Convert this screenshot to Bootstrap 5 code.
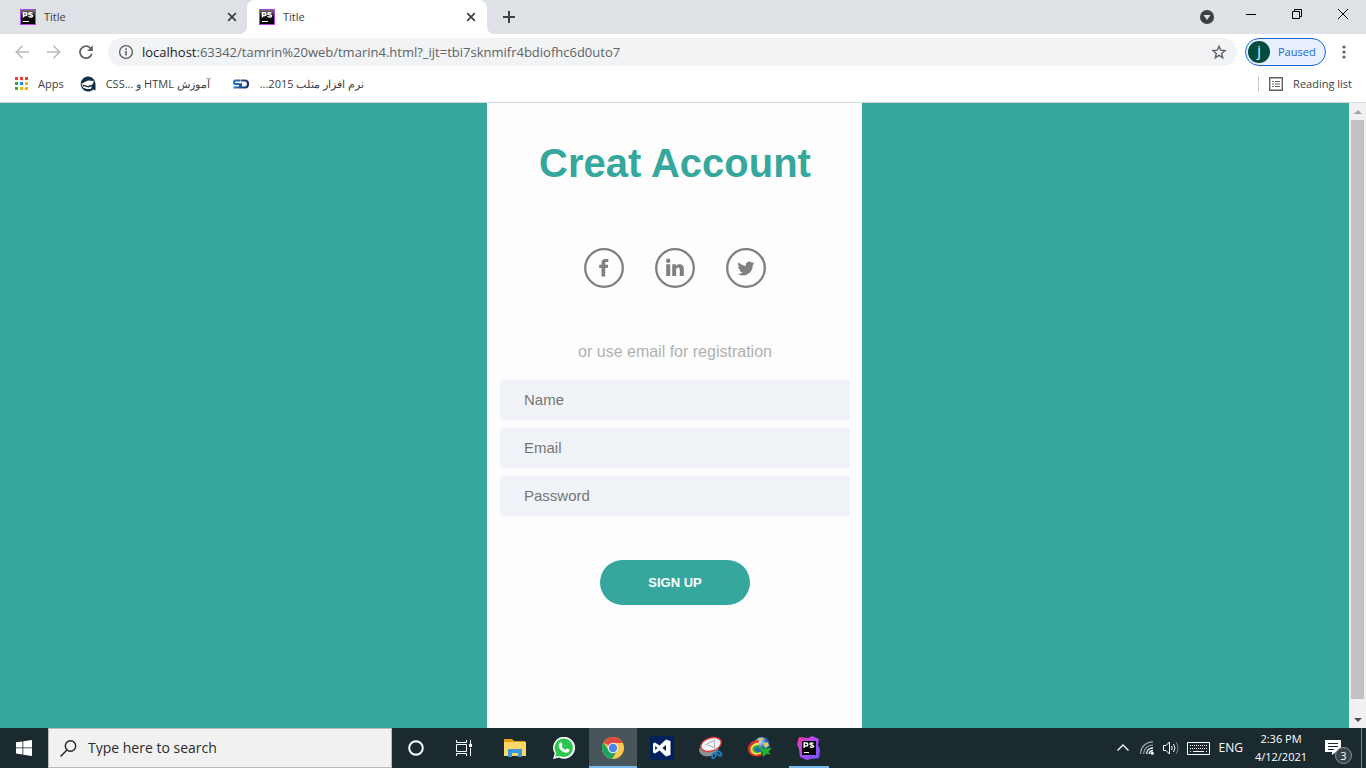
<!DOCTYPE html>
<html lang="en">
<head>
<meta charset="utf-8">
<meta name="viewport" content="width=device-width, initial-scale=1">
<title>Title</title>
<link href="https://cdn.jsdelivr.net/npm/bootstrap@5.3.0/dist/css/bootstrap.min.css" rel="stylesheet">
<style>
  :root { --teal: #35a79c; --chrome: #dee1e6; --ink: #3c4043; }
  body { font-family: "Open Sans", "Noto Sans", sans-serif; font-size: 12px; line-height: 16px; color: var(--ink); }
  svg { display: block; flex: none; }
  button { color: inherit; }
  .plain { border: 0; background: none; padding: 0; display: flex; align-items: center; justify-content: center; flex: none; }

  .tab-strip { height: 34px; background: var(--chrome); padding-left: 8px; }
  .browser-tab { width: 240px; height: 34px; padding: 0 11px 0 12px; font-size: 11px; position: relative; }
  .browser-tab.current { background: #fff; border-radius: 8px 8px 0 0; margin-left: -1px; }
  .browser-tab.current::before, .browser-tab.current::after { content: ""; position: absolute; bottom: 0; width: 8px; height: 8px; }
  .browser-tab.current::before { left: -8px; background: radial-gradient(circle at 0 0, transparent 8px, #fff 8px); }
  .browser-tab.current::after { right: -8px; background: radial-gradient(circle at 100% 0, transparent 8px, #fff 8px); }
  .new-tab { width: 28px; height: 34px; margin-left: 8px; }
  .win-btn { width: 46px; height: 28px; color: #000; }

  .tool-row { height: 36px; padding: 0 12px 0 6px; }
  .nav-btn { width: 32px; height: 28px; }
  .omnibox { height: 28px; border-radius: 14px; background: #f1f3f4; margin: 0 8px 0 6px; padding: 0 10px; }
  .omnibox .address { font-size: 13px; color: #5f6368; }
  .omnibox .address b { font-weight: 400; color: #202124; }
  .profile { width: 81px; height: 28px; border: 1px solid #1967d2; border-radius: 14px; background: #e8f0fe; color: #1967d2; padding: 0 0 0 2px; font-size: 11px; justify-content: flex-start; gap: 8px; }
  .avatar { width: 22px; height: 22px; border-radius: 50%; background: #004d40; color: #fff; font-size: 14px; line-height: 20px; }
  .menu-btn { width: 20px; height: 28px; margin-left: 8px; }

  .bookmark-row { height: 33px; padding: 0 14px; border-bottom: 1px solid #d5d8dc; }
  .bookmark-row a { color: var(--ink); text-decoration: none; display: flex; align-items: center; gap: 10px; height: 28px; font-size: 11px; white-space: nowrap; }
  .bookmark-row a + a { margin-left: 16px; }
  .bookmark-row [dir] { min-width: 110px; text-align: left; }
  .divider { width: 1px; height: 16px; background: #c6c9cd; }

  .viewport-area { background: var(--teal); min-height: 0; }
  .signup { width: 375px; max-width: 100%; background: #fdfdfd; font-family: "Liberation Sans", Arial, sans-serif; padding: 32px 12px 0 13px; }
  .signup h1 { font-size: 40px; line-height: 56px; font-weight: 700; color: var(--teal); margin: 0 0 57px; }
  .social { gap: 31px; margin-bottom: 52px; }
  .social a { width: 40px; height: 40px; }
  .signup p { font-size: 16px; line-height: 24px; color: #b0b0b0; margin: 0 0 16px; }
  .signup .form-control { height: 40px; border: 0; border-radius: 0; background: #f0f4f8; padding: 0 24px 2px; font-size: 15px; margin-bottom: 8px; }
  .signup .form-control::placeholder { color: #757575; }
  .signup .btn { width: 150px; height: 45px; border: 0; border-radius: 24px; background: var(--teal); color: #fff; font-size: 13px; font-weight: 700; margin-top: 36px; }

  .scroll-track { width: 17px; background: #f1f1f1; padding: 0 2px; }
  .scroll-track .arrow { height: 17px; }
  .scroll-thumb { background: #c1c1c1; flex: 0 1 579px; }

  .taskbar { height: 40px; background: #1b2a2f; color: #fff; }
  .task-btn { width: 48px; height: 40px; }
  .task-btn.running { border-bottom: 2px solid #76b9ed; padding-top: 2px; }
  .task-btn.running:not(.front) { width: 40px; margin: 0 4px; }
  .task-btn.front { background: #48565b; }
  .search-box { width: 344px; background: #f1f1f1; border: 1px solid #b9b9b9; padding-left: 11px; gap: 11px; }
  .search-box input { border: 0; background: none; outline: 0; font-size: 14px; color: #222; padding: 0; min-width: 0; }
  .search-box input::placeholder { color: #2b2b2b; opacity: 1; }
  .app-list { padding-left: 3px; gap: 1px; }
  .tray-btn { width: 24px; height: 40px; }
  .clock { width: 68px; font-size: 11px; line-height: 18px; color: #fff; }
  .note-btn { width: 40px; height: 40px; margin-left: 2px; position: relative; }
  .note-count { position: absolute; right: 5px; bottom: 4px; width: 17px; height: 17px; border-radius: 50%; background: #39444a; border: 1px solid #8c9499; font-size: 11px; line-height: 15px; }
  .desktop-edge { width: 5px; border-left: 1px solid #77838a; margin-left: 4px; }
</style>
</head>
<body class="d-flex flex-column vh-100 overflow-hidden">

<svg width="0" height="0" class="position-absolute" aria-hidden="true">
  <defs>
    <linearGradient id="psg" x1="0" y1="0" x2="0" y2="1"><stop offset="0" stop-color="#777"/><stop offset=".5" stop-color="#111"/><stop offset="1" stop-color="#000"/></linearGradient>
    <linearGradient id="sdg" gradientUnits="userSpaceOnUse" x1="0" y1="0" x2="16" y2="0"><stop offset="0" stop-color="#2c7cc4"/><stop offset="1" stop-color="#1d2a70"/></linearGradient>
    <linearGradient id="blob" x1="0" y1="0" x2="1" y2="1"><stop offset="0" stop-color="#ff318c"/><stop offset=".4" stop-color="#b74af7"/><stop offset="1" stop-color="#6b57ff"/></linearGradient>
    <radialGradient id="globe" cx=".35" cy=".3"><stop offset="0" stop-color="#cfe6fb"/><stop offset=".6" stop-color="#4d8fdc"/><stop offset="1" stop-color="#1c4f9c"/></radialGradient>
    <symbol id="storm" viewBox="0 0 16 16">
      <rect x=".5" y=".5" width="15" height="15" fill="url(#psg)" stroke="#b345f1"/>
      <path d="M3.500 8.500V3.700h2a1.400 1.400 0 0 1 0 2.900h-2M12.500 4.200c-1.500-.9-3.700-.7-3.700.5 0 1.400 3.700.8 3.700 2.300 0 1.500-2.600 1.300-4 .4" fill="none" stroke="#fff" stroke-width="1.500"/>
      <path d="M3 12.500h6" stroke="#fff"/>
    </symbol>
    <symbol id="cross" viewBox="0 0 10 10"><path d="M1.200 1.200l7.600 7.600M8.800 1.200L1.200 8.800" stroke="#3c4043" stroke-width="1.700"/></symbol>
  </defs>
</svg>

<header class="flex-shrink-0 bg-white">
  <div class="tab-strip d-flex">
    <div class="browser-tab d-flex align-items-center">
      <svg width="16" height="16"><use href="#storm"/></svg><span class="ms-2 flex-grow-1">Title</span>
      <button class="plain" aria-label="Close tab"><svg width="10" height="10"><use href="#cross"/></svg></button>
    </div>
    <div class="browser-tab current d-flex align-items-center">
      <svg width="16" height="16"><use href="#storm"/></svg><span class="ms-2 flex-grow-1">Title</span>
      <button class="plain" aria-label="Close tab"><svg width="10" height="10"><use href="#cross"/></svg></button>
    </div>
    <button class="plain new-tab" aria-label="New tab"><svg width="12" height="12" viewBox="0 0 12 12"><path d="M6 0v12M0 6h12" stroke="#3c4043" stroke-width="2"/></svg></button>
    <div class="d-flex ms-auto">
      <button class="plain me-2" aria-label="Search tabs"><svg width="26" height="14" viewBox="0 0 26 14"><circle cx="13" cy="7" r="7" fill="#3c4043"/><path d="M9.500 5h7L13 10z" fill="#dee1e6"/></svg></button>
      <button class="plain win-btn" aria-label="Minimize"><svg width="10" height="10"><path d="M0 5.500h10" stroke="#000"/></svg></button>
      <button class="plain win-btn" aria-label="Restore"><svg width="10" height="10" fill="none" stroke="#000"><path d="M.5 2.500h7v7h-7zM2.500 2.500v-2h7v7h-2"/></svg></button>
      <button class="plain win-btn" aria-label="Close"><svg width="10" height="10"><path d="M0 0l10 10M10 0L0 10" stroke="#000"/></svg></button>
    </div>
  </div>

  <div class="tool-row d-flex align-items-center">
    <button class="plain nav-btn" aria-label="Back"><svg width="14" height="14" viewBox="0 0 14 14" fill="none" stroke="#b9bbbe" stroke-width="1.600"><path d="M14 7H1.500M7.500.8L1.300 7l6.200 6.200"/></svg></button>
    <button class="plain nav-btn" aria-label="Forward"><svg width="14" height="14" viewBox="0 0 14 14" fill="none" stroke="#b9bbbe" stroke-width="1.600"><path d="M0 7h12.500M6.500.8L12.700 7l-6.200 6.200"/></svg></button>
    <button class="plain nav-btn" aria-label="Reload"><svg width="14" height="14" viewBox="0 0 14 14"><path d="M12.800 8.800A6 6 0 1 1 11.200 2.800L12 3.600" fill="none" stroke="#5f6368" stroke-width="1.800"/><path d="M13.800.3v5.700H8.100z" fill="#5f6368"/></svg></button>
    <div class="omnibox d-flex align-items-center flex-grow-1">
      <svg width="16" height="16" viewBox="0 0 16 16"><circle cx="8" cy="8" r="6.400" fill="none" stroke="#5f6368" stroke-width="1.400"/><path d="M8 7v4.500M8 4.300v1.600" stroke="#5f6368" stroke-width="1.600"/></svg>
      <span class="address ms-2 flex-grow-1"><b>localhost</b>:63342/tamrin%20web/tmarin4.html?_ijt=tbi7sknmifr4bdiofhc6d0uto7</span>
      <button class="plain" aria-label="Bookmark this page"><svg width="16" height="16" viewBox="0 0 16 16"><path d="M8 2.200l1.700 4 4.300.4-3.300 2.800 1 4.300L8 11.400l-3.700 2.300 1-4.300L2 6.600l4.300-.4z" fill="none" stroke="#5f6368" stroke-width="1.400"/></svg></button>
    </div>
    <button class="plain profile"><span class="avatar">j</span><span>Paused</span></button>
    <button class="plain menu-btn" aria-label="Menu"><svg width="4" height="14" fill="#5f6368"><circle cx="2" cy="2" r="1.600"/><circle cx="2" cy="7" r="1.600"/><circle cx="2" cy="12" r="1.600"/></svg></button>
  </div>

  <nav class="bookmark-row d-flex">
    <a href="#"><svg width="14" height="14"><path d="M1 0h3v3H1zM6 0h3v3H6zM11 0h3v3h-3z" fill="#ea4335"/><path d="M1 5h3v3H1zM1 10h3v3H1z" fill="#34a853"/><path d="M6 5h3v3H6z" fill="#1a85f5"/><path d="M11 5h3v3h-3zM6 10h3v3H6zM11 10h3v3h-3z" fill="#f4b400"/></svg><span>Apps</span></a>
    <a href="#"><svg width="16" height="16" viewBox="0 0 16 16"><path d="M8 .5a7.500 7.500 0 0 1 7.500 7.500v6.500l-2.200-1A7.500 7.500 0 1 1 8 .5z" fill="#102f43"/><path d="M1 8l7-3.500 6 .5-1.500 3.500L8 10z" fill="#fff"/><path d="M4 10.300l4.500 1.200 3.500-1.300-1 2.500c-2 .8-5 .3-7-.8z" fill="#fff"/><path d="M2 8.500l2 3.500" stroke="#fff"/></svg><span dir="rtl">آموزش HTML و ...CSS</span></a>
    <a href="#"><svg width="18" height="16" viewBox="0 0 16 16"><path d="M7.500 4.500h-5C.5 4.500.5 8 2.500 8h3c2 0 2 3.500 0 3.500H.5M9 8H7.500M8 4.500h4c4 0 4 7 0 7H8V8" fill="none" stroke="url(#sdg)" stroke-width="2.200"/></svg><span dir="rtl">نرم افزار متلب 2015...</span></a>
    <a href="#" class="ms-auto"><span class="divider"></span><svg width="14" height="14" fill="none" stroke="#5f6368"><path d="M.7.7h12.600v12.600H.7z" stroke-width="1.400"/><path d="M3 4.500h2M6 4.500h5M3 7h2M6 7h5M3 9.500h2M6 9.500h5"/></svg><span>Reading list</span></a>
  </nav>
</header>

<main class="viewport-area d-flex flex-grow-1">
  <div class="flex-grow-1 d-flex justify-content-center">
    <form class="signup text-center">
      <h1>Creat Account</h1>
      <div class="social d-flex justify-content-center">
        <a href="#" aria-label="Facebook"><svg width="40" height="40" fill="#808080"><circle cx="20" cy="20" r="18.800" fill="none" stroke="#808080" stroke-width="2.300"/><path d="M17.500 28.500V20h-2.300v-3.300h2.300V15c0-2.700 1.400-4 3.800-4h3v3.100h-1.900c-1 0-1.200.5-1.200 1.200v1.400h3L23.800 20h-2.600v8.500z"/></svg></a>
        <a href="#" aria-label="LinkedIn"><svg width="40" height="40" fill="#808080"><circle cx="20" cy="20" r="18.800" fill="none" stroke="#808080" stroke-width="2.300"/><circle cx="13.200" cy="12.700" r="2.200"/><path d="M11.200 16.300h4V28h-4zM17.200 16.300H21v1.600c1.600-2.500 7.800-2.600 7.800 3V28h-4v-6.200c0-3.200-3.600-2.900-3.600 0V28h-4z"/></svg></a>
        <a href="#" aria-label="Twitter"><svg width="40" height="40" fill="#808080"><circle cx="20" cy="20" r="18.800" fill="none" stroke="#808080" stroke-width="2.300"/><path transform="translate(11.500 11.500) scale(1.060)" d="M5.026 15c6.038 0 9.341-5.003 9.341-9.334q.002-.211-.006-.422A6.700 6.700 0 0 0 16 3.542a6.700 6.700 0 0 1-1.889.518 3.300 3.300 0 0 0 1.447-1.817 6.500 6.500 0 0 1-2.087.793A3.286 3.286 0 0 0 7.875 6.030a9.320 9.320 0 0 1-6.767-3.429 3.290 3.290 0 0 0 1.018 4.382A3.300 3.300 0 0 1 .64 6.575v.045a3.290 3.290 0 0 0 2.632 3.218 3.200 3.200 0 0 1-.865.115 3 3 0 0 1-.614-.057 3.280 3.280 0 0 0 3.067 2.277A6.600 6.600 0 0 1 .78 13.580a6 6 0 0 1-.78-.045A9.340 9.340 0 0 0 5.026 15"/></svg></a>
      </div>
      <p>or use email for registration</p>
      <input class="form-control" type="text" placeholder="Name" aria-label="Name">
      <input class="form-control" type="email" placeholder="Email" aria-label="Email">
      <input class="form-control" type="password" placeholder="Password" aria-label="Password">
      <button class="btn" type="button">SIGN UP</button>
    </form>
  </div>
  <div class="scroll-track d-flex flex-column">
    <div class="arrow d-flex align-items-center justify-content-center"><svg width="8" height="4"><path d="M0 4l4-4 4 4z" fill="#a3a3a3"/></svg></div>
    <div class="scroll-thumb"></div>
    <div class="arrow mt-auto d-flex align-items-center justify-content-center"><svg width="8" height="4"><path d="M0 0l4 4 4-4z" fill="#505050"/></svg></div>
  </div>
</main>

<footer class="taskbar d-flex flex-shrink-0">
  <button class="plain task-btn" aria-label="Start"><svg width="16" height="16" fill="#fff"><path d="M0 2.300L6.500 1.400v6.100H0zM7.300 1.300L16 0v7.500H7.300zM0 8.300h6.500v6.200L0 13.600zM7.300 8.300H16V16l-8.700-1.300z"/></svg></button>
  <label class="search-box d-flex align-items-center">
    <svg width="17" height="17" fill="none" stroke="#222" stroke-width="1.400"><circle cx="10.500" cy="6" r="5.200"/><path d="M7 10L.5 16.500"/></svg>
    <input class="flex-grow-1" type="search" placeholder="Type here to search" aria-label="Search">
  </label>
  <button class="plain task-btn" aria-label="Cortana"><svg width="16" height="16"><circle cx="8" cy="8" r="6.800" fill="none" stroke="#fff" stroke-width="2"/></svg></button>
  <button class="plain task-btn" aria-label="Task view"><svg width="16" height="16" fill="none" stroke="#fff"><path d="M.5 0v2.500h10V0M.5 4.500h10v7H.5zM.5 16v-2.500h10V16M14.500 0v4M14.500 8v8"/><path d="M13 4h3v3h-3z" fill="#fff" stroke="none"/></svg></button>
  <div class="app-list d-flex">
    <button class="plain task-btn" aria-label="File Explorer"><svg width="22" height="20"><path d="M0 1h8l2 2h11v14H0z" fill="#e5a00d"/><path d="M0 4h22v14H0z" fill="#ffd766"/><path d="M4 11h14v8h-4v-4H8v4H4z" fill="#3a96dd"/></svg></button>
    <button class="plain task-btn" aria-label="WhatsApp"><svg width="22" height="22" viewBox="0 0 22 22"><path d="M0 22l1.700-5.500A11 11 0 1 1 6 20.500z" fill="#fff"/><path d="M2.200 19.800l1.100-3.700a9.200 9.200 0 1 1 3.300 2.800z" fill="#2cc64f"/><path d="M7.300 5.500c.6-.3 1.100-.1 1.400.6l.8 1.800c.1.600-1 1.400-.8 1.700.9 1.600 2 2.500 3.600 3.200.6.100 1.200-1.500 1.800-1.300l2.200 1.100c.6.300-.2 3.400-2.900 3.200-4-.4-8.200-4.400-7.700-7.900.1-1 .8-2 1.600-2.400z" fill="#fff"/></svg></button>
    <button class="plain task-btn running front" aria-label="Chrome"><svg width="22" height="22" viewBox="0 0 22 22"><circle cx="11" cy="11" r="11" fill="#fbc94a"/><path d="M11 11L1.500 5.500A11 11 0 0 1 20.500 5.500L21 6H11z" fill="#dc4b3e"/><path d="M1.500 5.500A11 11 0 0 0 10 22l5.300-8.500L11 11 6.700 13.500z" fill="#1fa263"/><circle cx="11" cy="11" r="5.200" fill="#f4f6f8"/><circle cx="11" cy="11" r="4.200" fill="#4a86ee"/></svg></button>
    <button class="plain task-btn" aria-label="Visual Studio"><svg width="24" height="24"><path d="M0 0h24v24H0z" fill="#00205b"/><path d="M16 3.500l4.500 1.500v14L16 20.500l-6.500-6L5 17.500l-2-1V7.500l2-1 4.500 3zM5.200 10v4L7.500 12zM16 9l-3.700 3L16 15z" fill="#fff" fill-rule="evenodd"/></svg></button>
    <button class="plain task-btn" aria-label="Snipping Tool"><svg width="24" height="24"><ellipse cx="10" cy="13" rx="10" ry="7" transform="rotate(-18 10 13)" fill="#8c9296"/><ellipse cx="12" cy="8.500" rx="10.500" ry="6.500" transform="rotate(-18 12 8.500)" fill="#f3f5f7" stroke="#df3a3e" stroke-width="1.300"/><path d="M6 9l9-4.500M9 9l6 2.500M15 4l1 10" stroke="#a5abaf" fill="none"/><g fill="none" stroke="#1b7fc0" stroke-width="1.800"><ellipse cx="15" cy="19.500" rx="1.600" ry="3" transform="rotate(20 15 19.500)"/><ellipse cx="20" cy="17.500" rx="1.600" ry="3" transform="rotate(-50 20 17.500)"/></g></svg></button>
    <button class="plain task-btn" aria-label="Internet Download Manager"><svg width="24" height="24"><circle cx="14" cy="9" r="8" fill="url(#globe)"/><path d="M10 3c4-2 7-1 5 1l-3 1zM15 7l5-1 1 4-4 2z" fill="#d8c964"/><g fill="none" stroke-width="2.300"><path d="M11 5.500C3 5 0 11 1.500 15S9 20.500 14 18" stroke="#e53227"/><path d="M11 7.800c-6 0-8.500 4-7.200 7S9 18 13 16.500" stroke="#ffe14a"/><path d="M11 10c-4 0-6 2.500-5 4.500s4 1.500 7 .5" stroke="#35b24a"/><path d="M11 12c-3 0-4 2-2 2.500h4" stroke="#2860c8"/></g><path d="M9 10.500l6 2 9-.500-3.500 3.500 2 3-4-.5-3.500 3-.5-4.500z" fill="#22b32e"/></svg></button>
    <button class="plain task-btn running" aria-label="PhpStorm"><svg width="24" height="24"><path d="M2 1l9 1 4-2 7 3-1 6 2 5-1 8-8 1-4 1-7-3-1-8L0 8z" fill="url(#blob)"/><path d="M5 5h14v14H5z"/><path d="M7.200 12V7h2.100a1.400 1.400 0 0 1 0 3H7.200M16.500 7.400c-1.500-.8-3.500-.6-3.500.6 0 1.300 3.500.8 3.500 2.300 0 1.400-2.500 1.300-3.800.4" fill="none" stroke="#fff" stroke-width="1.500"/><path d="M7 16.500h5" stroke="#fff"/></svg></button>
  </div>
  <div class="d-flex ms-auto align-items-center">
    <button class="plain tray-btn" aria-label="Show hidden icons"><svg width="12" height="8"><path d="M.5 6.500L6 1l5.500 5.500" fill="none" stroke="#fff" stroke-width="1.300"/></svg></button>
    <button class="plain tray-btn" aria-label="Network"><svg width="14" height="14" fill="none"><g stroke="#a9b1b5" stroke-width="1.200"><path d="M.6 13C.6 6 6 .8 13 .8M3.600 13c0-5 4-9 9.400-9"/></g><path d="M6.600 13c0-3.500 2.600-6 6.400-6M9.300 13c0-2 1.300-3.300 3.700-3.500" stroke="#fff" stroke-width="1.300"/><circle cx="12.300" cy="12.300" r="1.500" fill="#fff"/></svg></button>
    <button class="plain tray-btn" aria-label="Volume"><svg width="16" height="14" fill="none" stroke="#fff"><path d="M.5 4.500h2.500l3.500-3.500v12L3 9.500H.5zM8.500 5q1.500 2 0 4M10.500 3q3 4 0 8"/><path d="M13 1q4 6 0 12" stroke="#7d878c"/></svg></button>
    <button class="plain tray-btn mx-1" aria-label="Touch keyboard"><svg width="23" height="13" fill="none" stroke="#fff"><path d="M.5.5h22v12H.5z"/><path d="M3 3.500h17M3 6.500h17" stroke-dasharray="1 1"/><path d="M3 9.500h1M6 9.500h11M19 9.500h1"/></svg></button>
    <button class="plain mx-1">ENG</button>
    <div class="clock text-center">2:36 PM<br>4/12/2021</div>
    <button class="plain note-btn" aria-label="Notifications"><svg width="16" height="16" class="me-2"><path d="M0 0h16v12h-5l-4 3v-3H0z" fill="#fff"/><path d="M3 3.500h10M3 6.500h10M3 9.500h6" stroke="#1b2a2f"/></svg><span class="note-count">3</span></button>
    <div class="desktop-edge align-self-stretch"></div>
  </div>
</footer>
<script src="https://cdn.jsdelivr.net/npm/bootstrap@5.3.0/dist/js/bootstrap.bundle.min.js"></script>
</body>
</html>
